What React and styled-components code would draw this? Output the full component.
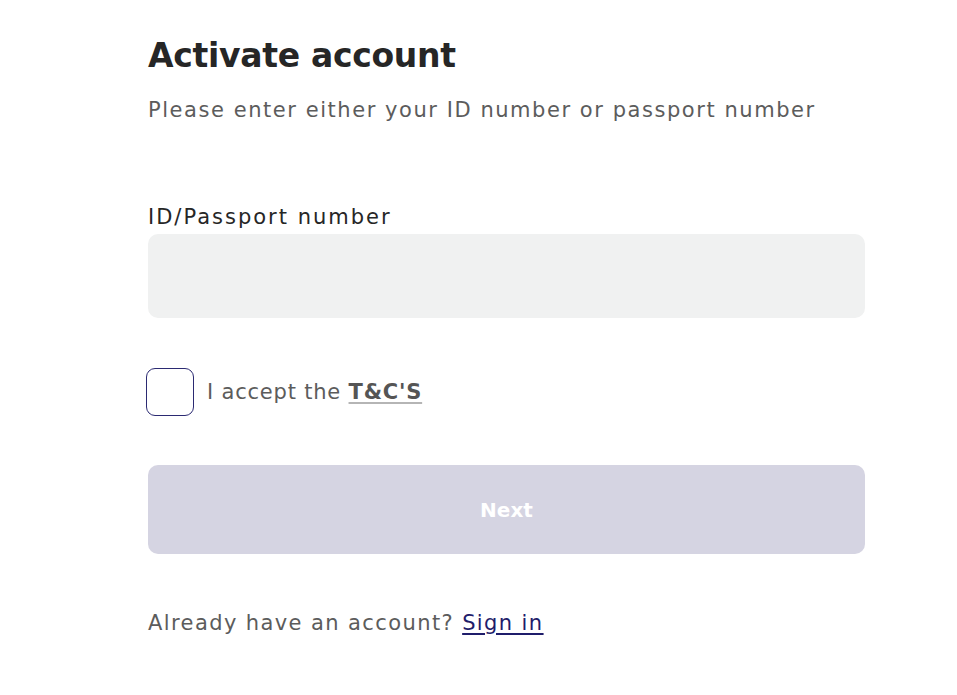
import React, { useState } from "react";
import styled, { createGlobalStyle } from "styled-components";

const Global = createGlobalStyle`
  html, body {
    margin: 0;
    padding: 0;
    background: #fff;
  }
  body {
    font-family: "DejaVu Sans", "Open Sans", sans-serif;
    color: #2b2b2b;
  }
`;

const Page = styled.div`
  width: 957px;
  min-height: 695px;
  box-sizing: border-box;
  padding: 34px 0 0 148px;
`;

const Form = styled.form`
  width: 717px;
  display: flex;
  flex-direction: column;
`;

const Title = styled.h1`
  margin: 0;
  font-size: 33px;
  line-height: 44px;
  font-weight: 700;
  color: #262626;
  letter-spacing: -0.3px;
`;

const Subtitle = styled.p`
  margin: 18px 0 0;
  font-size: 21px;
  line-height: 28px;
  letter-spacing: 1.55px;
  color: #5c5c5c;
`;

const Label = styled.label`
  margin-top: 79px;
  font-size: 21px;
  line-height: 28px;
  letter-spacing: 2px;
  color: #262626;
`;

const Input = styled.input`
  margin-top: 3px;
  height: 84px;
  border: none;
  border-radius: 10px;
  background: #f0f1f1;
  padding: 0 20px;
  font-size: 20px;
  font-family: inherit;
  outline: none;
`;

const CheckRow = styled.div`
  margin-top: 50px;
  display: flex;
  align-items: center;
  gap: 13px;
  margin-left: -2px;
`;

const Box = styled.button`
  width: 48px;
  height: 48px;
  box-sizing: border-box;
  border: 1px solid #2b2a72;
  border-radius: 9px;
  background: #fff;
  padding: 0;
  cursor: pointer;
`;

const CheckText = styled.span`
  font-size: 21px;
  letter-spacing: 0.8px;
  color: #5c5c5c;
`;

const TermsLink = styled.a`
  font-weight: 700;
  color: #555;
  text-decoration: underline;
  text-decoration-color: #b5b5b5;
  text-underline-offset: 3px;
`;

const NextButton = styled.button`
  margin-top: 49px;
  height: 89px;
  border: none;
  border-radius: 10px;
  background: #d5d4e2;
  color: #fff;
  font-family: inherit;
  font-size: 20px;
  font-weight: 600;
  cursor: default;
`;

const Footer = styled.p`
  margin: 55px 0 0;
  font-size: 21px;
  line-height: 28px;
  letter-spacing: 1.4px;
  color: #5c5c5c;
`;

const SignIn = styled.a`
  color: #1f1d6b;
  font-weight: 500;
  text-decoration: underline;
  text-underline-offset: 3px;
`;

export default function App() {
  const [checked, setChecked] = useState(false);
  return (
    <Page>
      <Global />
      <Form onSubmit={(e) => e.preventDefault()}>
        <Title>Activate account</Title>
        <Subtitle>Please enter either your ID number or passport number</Subtitle>
        <Label htmlFor="idnum">ID/Passport number</Label>
        <Input id="idnum" />
        <CheckRow>
          <Box type="button" onClick={() => setChecked(!checked)} />
          <CheckText>
            I accept the <TermsLink href="#">T&amp;C'S</TermsLink>
          </CheckText>
        </CheckRow>
        <NextButton type="submit" disabled>
          Next
        </NextButton>
        <Footer>
          Already have an account? <SignIn href="#">Sign in</SignIn>
        </Footer>
      </Form>
    </Page>
  );
}
